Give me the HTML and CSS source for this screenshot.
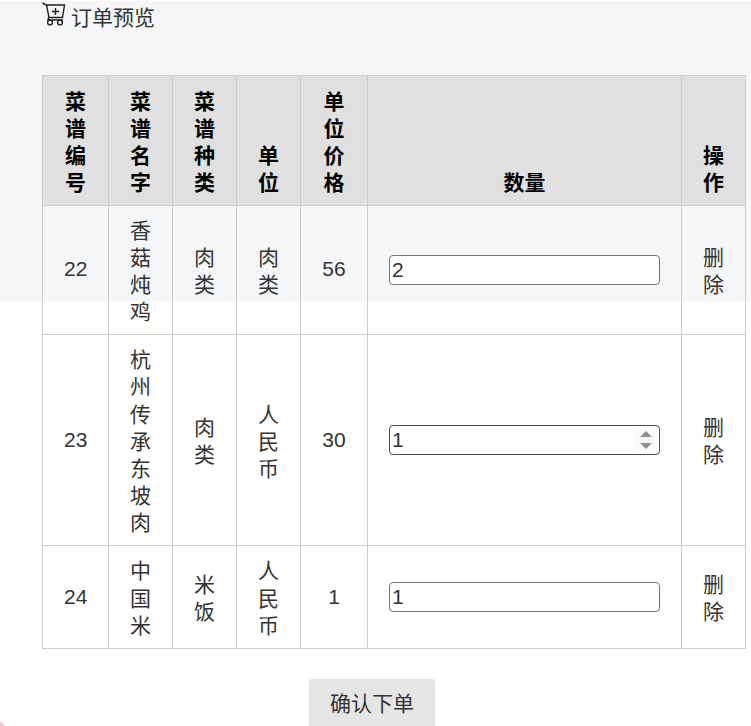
FILE: index.html
```html
<!DOCTYPE html>
<html lang="zh-CN">
<head>
<meta charset="utf-8">
<title>订单预览</title>
<link rel="stylesheet" href="styles.css">
</head>
<body>
<main class="page">
  <h2 class="title">
    <svg class="cart" width="24" height="25" viewBox="0 0 24 25" fill="none" stroke="#222" stroke-width="1.4">
      <path d="M0.5 1 L4.5 3 L7 15.5 H20.5 L22.5 3 H4.5"/>
      <path d="M6.5 15.5 L6 18 H21"/>
      <circle cx="8" cy="20.5" r="2.4"/>
      <circle cx="18" cy="20.5" r="2.4"/>
      <path d="M10 9.5 H17 M13.5 6 V13"/>
    </svg>
    <span>订单预览</span>
  </h2>
  <table class="orders">
    <colgroup>
      <col class="c66"><col class="c64"><col class="c64"><col class="c64"><col class="c67"><col class="c314"><col class="c64">
    </colgroup>
    <thead>
      <tr><th>菜谱编号</th><th>菜谱名字</th><th>菜谱种类</th><th>单位</th><th>单位价格</th><th>数量</th><th>操作</th></tr>
    </thead>
    <tbody>
      <tr><td class="num">22</td><td>香菇炖鸡</td><td>肉类</td><td>肉类</td><td class="num">56</td><td class="field"><input class="qty" type="number" value="2"></td><td>删除</td></tr>
      <tr><td class="num">23</td><td>杭州传承东坡肉</td><td>肉类</td><td>人民币</td><td class="num">30</td><td class="field"><div class="qty-wrap"><input class="qty qty-hover" type="number" value="1"><span class="spin" aria-hidden="true"><i class="up"></i><i class="down"></i></span></div></td><td>删除</td></tr>
      <tr><td class="num">24</td><td>中国米</td><td>米饭</td><td>人民币</td><td class="num">1</td><td class="field"><input class="qty" type="number" value="1"></td><td>删除</td></tr>
    </tbody>
  </table>
  <div class="actions"><button class="confirm" type="button">确认下单</button></div>
</main>
<div class="corner"></div>
</body>
</html>
```
FILE: styles.css
```css
* { box-sizing: border-box; }
html, body { margin: 0; height: 726px; overflow: hidden; background: #fff; }
body {
  font-family: "Liberation Sans", "Noto Sans CJK SC", sans-serif;
  font-size: 21px;
  line-height: 27.15px;
  color: #333;
}
.page {
  height: 726px;
  padding: 2px 0 0 42px;
  background: linear-gradient(#f5f6f8, #f5f6f8) no-repeat 0 1px / 100% 300px;
}
.title {
  display: flex;
  align-items: flex-start;
  gap: 5px;
  margin: 0 0 44px;
  height: 29px;
  font-size: 21px;
  font-weight: 400;
}
.title span { padding-top: 2px; }
.cart { display: block; }
.orders {
  width: 704px;
  table-layout: fixed;
  border-collapse: collapse;
}
.c66 { width: 66px; }
.c64 { width: 64px; }
.c67 { width: 67px; }
.c314 { width: 314px; }
.orders th, .orders td {
  border: 1px solid #ccc;
  text-align: center;
}
.orders th {
  padding: 12px 21px 8px;
  background: #e0e0e0;
  color: #000;
  font-weight: 700;
  vertical-align: bottom;
}
.orders td {
  padding: 11px 21px 9px;
  vertical-align: middle;
}
.orders td.num { padding: 9px 21px 11px; }
.orders td.field { padding: 10px 21px; }
.qty {
  display: block;
  width: 100%;
  height: 30px;
  padding: 1px 2px;
  border: 1px solid #767676;
  border-radius: 4px;
  background: #fff;
  color: #333;
  font: inherit;
  line-height: normal;
}
.qty-wrap { position: relative; }
.qty-hover { border-color: #4f4f4f; }
.qty-hover::-webkit-inner-spin-button { -webkit-appearance: none; margin: 0; }
.spin {
  position: absolute;
  top: 3px;
  right: 3px;
  bottom: 3px;
  width: 23px;
  display: flex;
  flex-direction: column;
  align-items: center;
  justify-content: center;
  gap: 6px;
  background: #fafafa;
}
.spin i {
  display: block;
  width: 0;
  height: 0;
  border-left: 6px solid transparent;
  border-right: 6px solid transparent;
}
.spin .up { border-bottom: 6px solid #8f8f8f; }
.spin .down { border-top: 6px solid #8f8f8f; }
.actions {
  display: flex;
  justify-content: center;
  width: 660px;
  margin-top: 30px;
}
.confirm {
  padding: 0 21px;
  height: 50px;
  border: 0;
  border-radius: 3px;
  background: #e5e5e5;
  color: #333;
  font: inherit;
}
.corner {
  position: fixed;
  left: -4px;
  bottom: -4px;
  width: 8px;
  height: 8px;
  border-radius: 50%;
  background: #f6c6d6;
}
```
